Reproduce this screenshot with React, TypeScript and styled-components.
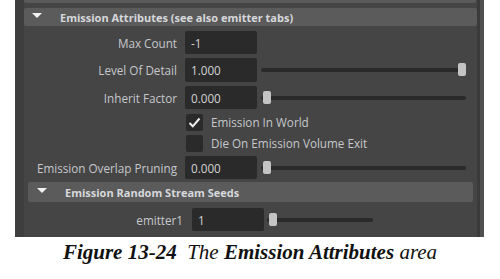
import React from 'react';
import styled, { createGlobalStyle } from 'styled-components';

const GlobalStyle = createGlobalStyle`
  html, body {
    margin: 0;
    padding: 0;
    background: #ffffff;
  }
  body {
    font-family: "Open Sans", "Liberation Sans", sans-serif;
  }
`;

const Page = styled.div`
  width: 500px;
  height: 279px;
  display: flex;
  flex-direction: column;
`;

const Panel = styled.div`
  margin-left: 15px;
  width: 469px;
  height: 237px;
  display: flex;
  background: #3e3e3e;
`;

const Body = styled.div`
  flex: 1;
  margin-left: 9px;
  background: #454545;
  display: flex;
  flex-direction: column;
`;

const Scrollbar = styled.div`
  width: 7px;
  display: flex;
  &::before {
    content: '';
    width: 3px;
    background: #3a3a3a;
  }
  &::after {
    content: '';
    flex: 1;
    background: #505050;
  }
`;

const TopEdge = styled.div`
  height: 3px;
  margin-right: 1px;
  background: #5a5a5a;
  border-radius: 0 0 2px 2px;
`;

const Section = styled.div<{ $inset?: number }>`
  display: flex;
  flex-direction: column;
  margin: 0 ${p => p.$inset ?? 0}px;
`;

const Header = styled.div<{ $h: number; $top: number }>`
  height: ${p => p.$h}px;
  margin-top: ${p => p.$top}px;
  background: #5b5b5b;
  border-radius: 2px;
  display: flex;
  align-items: center;
  color: #d6d8dc;
  font-weight: 700;
  font-size: 11px;
  white-space: nowrap;
`;

const Arrow = styled.span<{ $left: number; $gap: number }>`
  width: 0;
  height: 0;
  margin-left: ${p => p.$left}px;
  margin-right: ${p => p.$gap}px;
  border-left: 5px solid transparent;
  border-right: 5px solid transparent;
  border-top: 5px solid #f2f2f2;
  align-self: center;
  transform: translateY(-2px);
`;

const Row = styled.div<{ $label: number; $gap: number; $top: number; $h?: number }>`
  display: grid;
  grid-template-columns: ${p => p.$label}px 72px auto;
  column-gap: ${p => p.$gap}px;
  align-items: center;
  height: ${p => p.$h ?? 23}px;
  margin-top: ${p => p.$top}px;
`;

const Label = styled.span`
  text-align: right;
  color: #c6c8cc;
  font-size: 11.7px;
  white-space: nowrap;
`;

const Field = styled.div`
  height: 100%;
  box-sizing: border-box;
  background: #2a2a2a;
  border-radius: 2px;
  color: #d2d2d2;
  font-size: 11.7px;
  display: flex;
  align-items: center;
  padding-left: 6px;
`;

const Track = styled.div<{ $w: number; $left: number }>`
  position: relative;
  width: ${p => p.$w}px;
  height: 4px;
  margin-left: ${p => p.$left}px;
  background: #2a2a2a;
  border-radius: 2px;
`;

const Handle = styled.div`
  position: absolute;
  top: -5px;
  width: 8px;
  height: 13px;
  background: #c4c4c4;
  border-radius: 2px;
`;

const CheckRow = styled.div<{ $top: number }>`
  display: flex;
  align-items: center;
  gap: 8px;
  height: 18px;
  margin-top: ${p => p.$top}px;
  padding-left: 162px;
`;

const Box = styled.div`
  width: 17px;
  height: 17px;
  background: #2a2a2a;
  border-radius: 2px;
  display: flex;
  align-items: center;
  justify-content: center;
`;

const CheckText = styled.span`
  color: #c6c8cc;
  font-size: 11.7px;
  white-space: nowrap;
`;

const Caption = styled.div`
  margin-top: 3px;
  text-align: center;
  font-family: "Liberation Serif", "Times New Roman", serif;
  font-style: italic;
  font-size: 21px;
  color: #111111;
  white-space: pre;
  b {
    font-weight: 700;
  }
`;

const Slider = ({ w, left, pos }: { w: number; left: number; pos: number }) => (
  <Track $w={w} $left={left}>
    <Handle style={{ left: pos }} />
  </Track>
);

const Check = ({ on, text, top }: { on: boolean; text: string; top: number }) => (
  <CheckRow $top={top}>
    <Box>
      {on && (
        <svg width="13" height="11" viewBox="0 0 13 11">
          <path d="M1.5 6 L4.8 9.3 L11.5 1.5" fill="none" stroke="#f0f0f0" strokeWidth="2" />
        </svg>
      )}
    </Box>
    <CheckText>{text}</CheckText>
  </CheckRow>
);

export default function App() {
  return (
    <Page>
      <GlobalStyle />
      <Panel>
        <Body>
          <TopEdge />
          <Header $h={18} $top={5}>
            <Arrow $left={8} $gap={18} />
            Emission Attributes (see also emitter tabs)
          </Header>
          <Row $label={153} $gap={8} $top={5}>
            <Label>Max Count</Label>
            <Field>-1</Field>
            <span />
          </Row>
          <Row $label={153} $gap={8} $top={4} $h={24}>
            <Label>Level Of Detail</Label>
            <Field>1.000</Field>
            <Slider w={205} left={-4} pos={197} />
          </Row>
          <Row $label={153} $gap={8} $top={4}>
            <Label>Inherit Factor</Label>
            <Field>0.000</Field>
            <Slider w={205} left={-4} pos={2} />
          </Row>
          <Check on top={4} text="Emission In World" />
          <Check on={false} top={3} text="Die On Emission Volume Exit" />
          <Row $label={153} $gap={8} $top={4}>
            <Label>Emission Overlap Pruning</Label>
            <Field>0.000</Field>
            <Slider w={205} left={-4} pos={2} />
          </Row>
          <Section $inset={4}>
            <Header $h={20} $top={3}>
              <Arrow $left={9} $gap={18} />
              Emission Random Stream Seeds
            </Header>
            <Row $label={155} $gap={9} $top={6}>
              <Label>emitter1</Label>
              <Field>1</Field>
              <Slider w={106} left={-6} pos={2} />
            </Row>
          </Section>
        </Body>
        <Scrollbar />
      </Panel>
      <Caption>
        <b>Figure 13-24</b>{'  The '}<b>Emission Attributes</b>{' area'}
      </Caption>
    </Page>
  );
}
